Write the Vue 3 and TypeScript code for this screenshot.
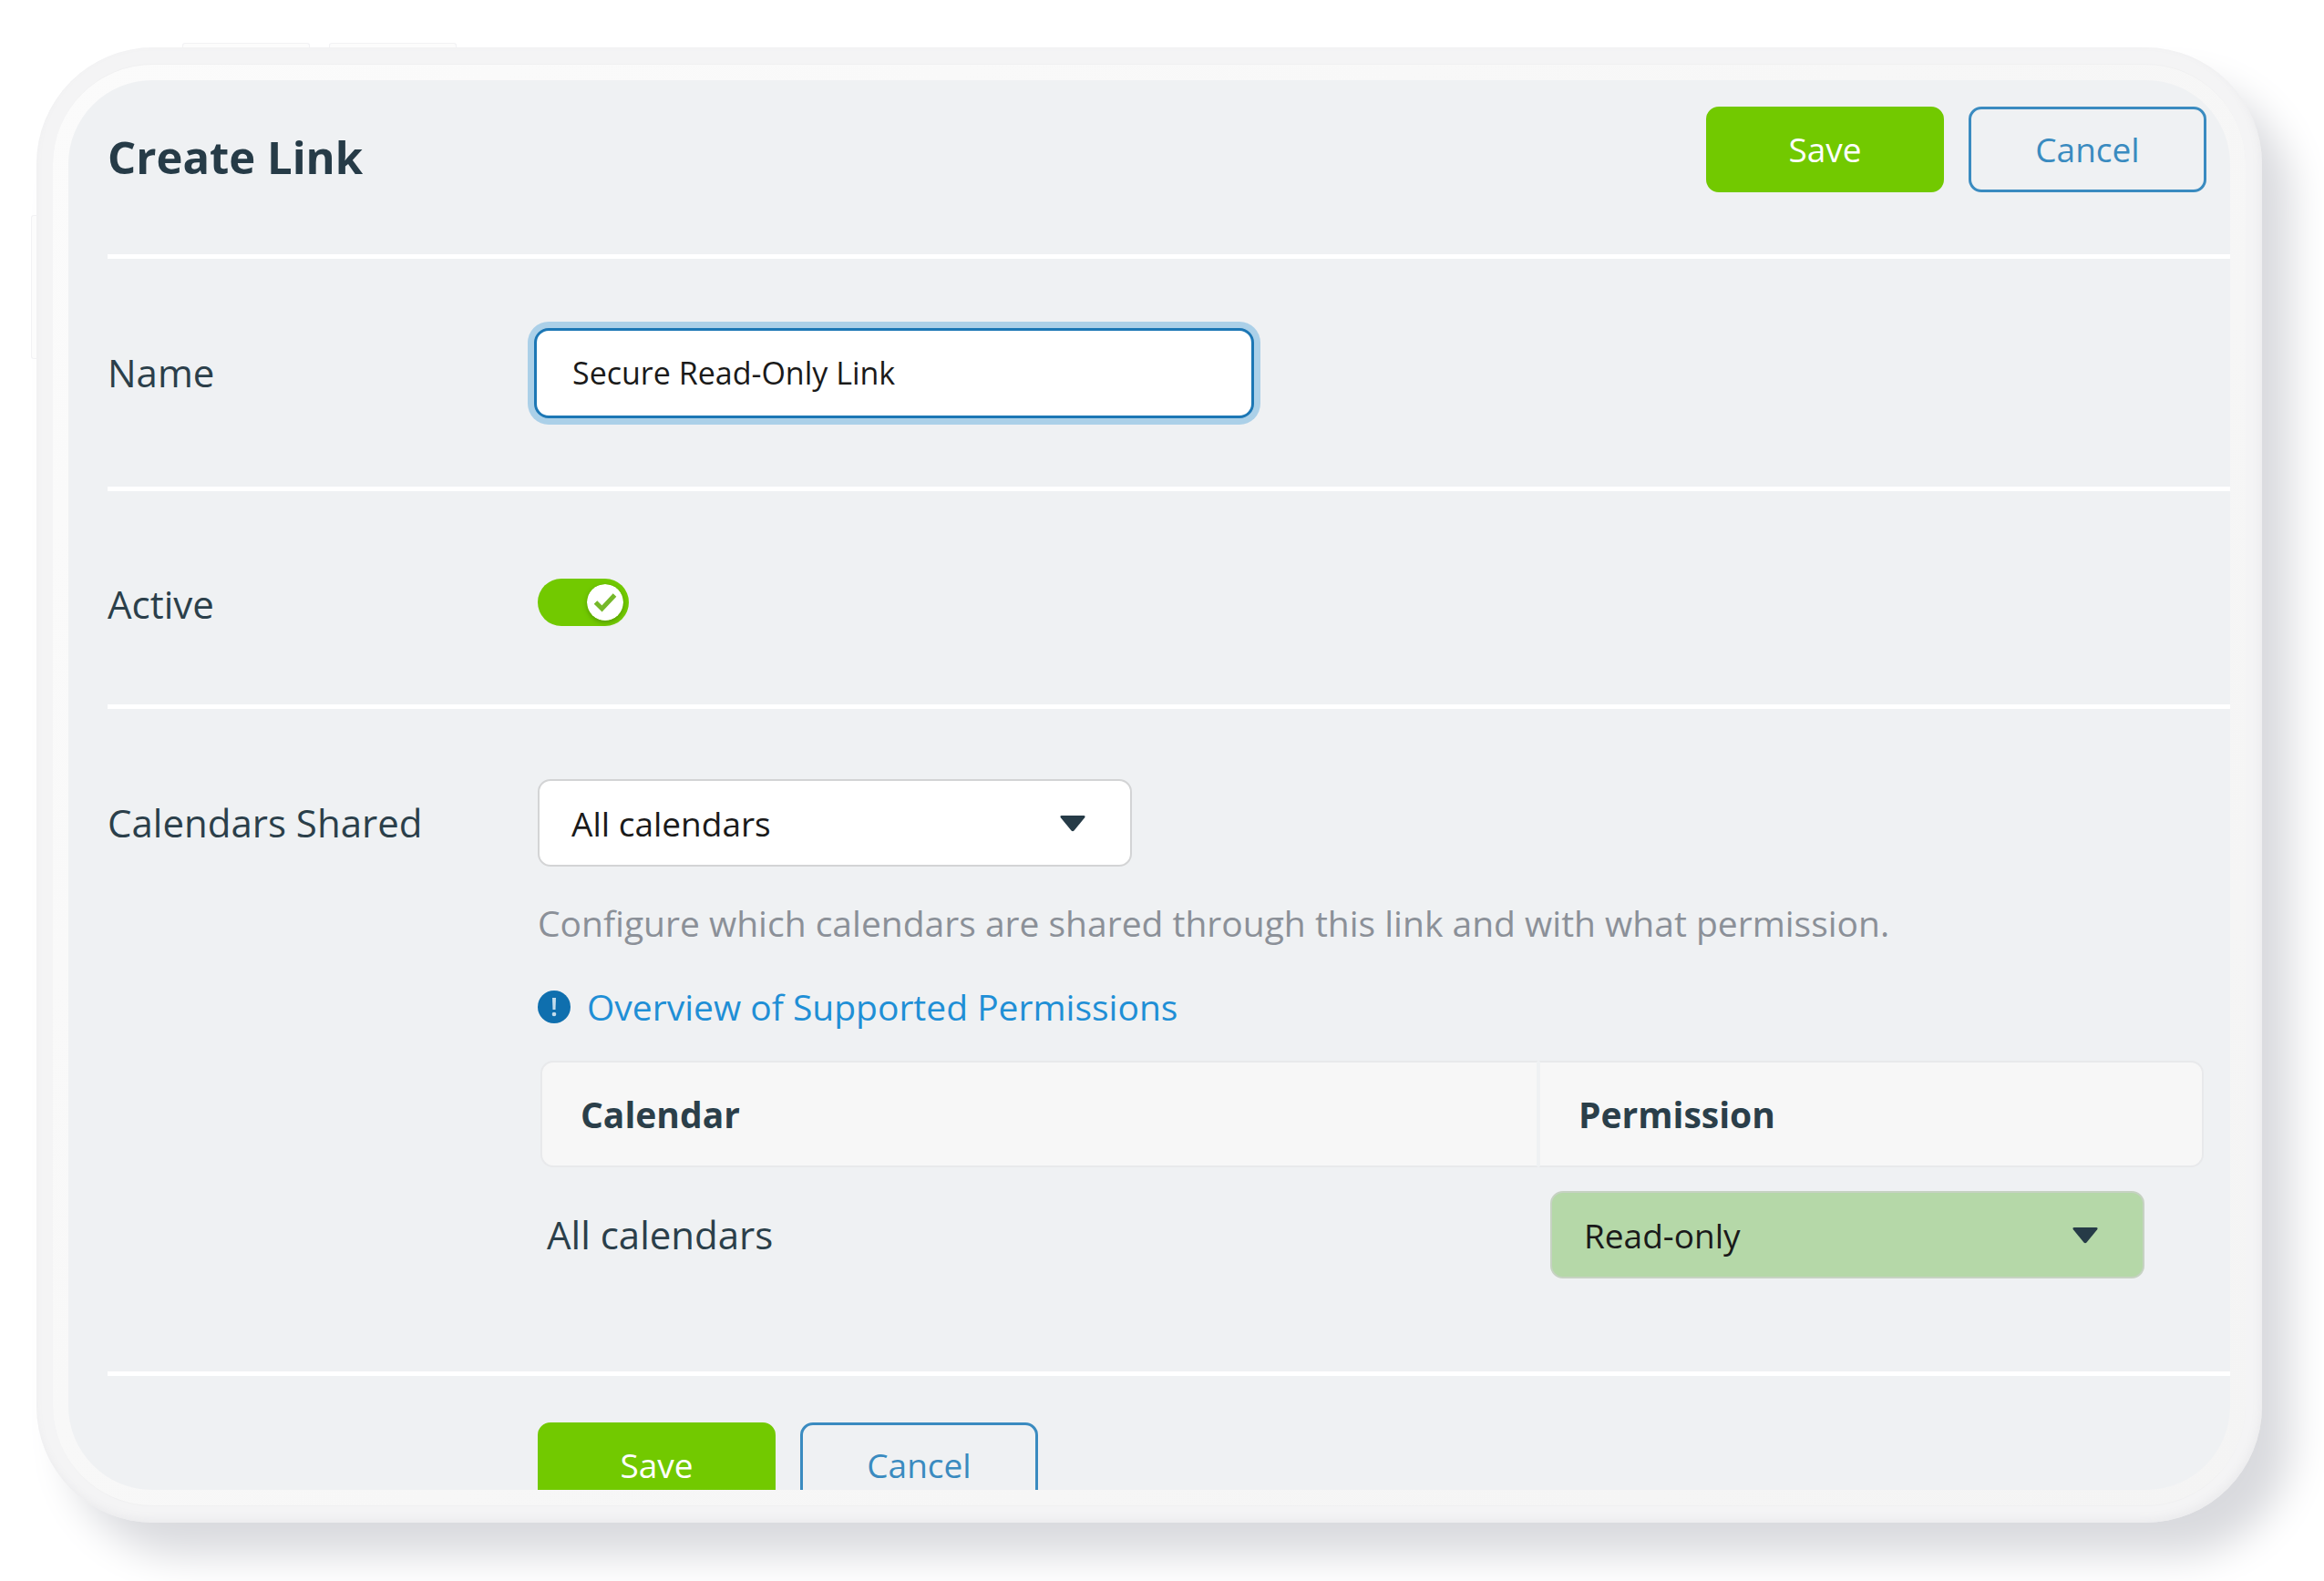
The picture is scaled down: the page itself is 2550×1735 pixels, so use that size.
<script setup lang="ts">
import { ref } from 'vue'

interface SharedCalendar {
  id: string
  name: string
  permission: string
}

const name = ref('Secure Read-Only Link')
const active = ref(true)
const scope = ref('all')
const calendars = ref<SharedCalendar[]>([
  { id: 'all', name: 'All calendars', permission: 'read' },
])
</script>

<template>
  <div class="page">
    <div class="device">
      <span class="key key-top key-first"></span>
      <span class="key key-top key-second"></span>
      <span class="key key-side"></span>
      <div class="bezel">
        <form class="screen" @submit.prevent>
          <header class="header">
            <h1 class="title">Create Link</h1>
            <div class="actions">
              <button class="btn btn-primary" type="submit">Save</button>
              <button class="btn btn-outline" type="button">Cancel</button>
            </div>
          </header>

          <section class="row row-name">
            <label class="label" for="link-name">Name</label>
            <div class="control">
              <input id="link-name" v-model="name" class="text-input" type="text" />
            </div>
          </section>

          <section class="row row-active">
            <label class="label" for="link-active">Active</label>
            <div class="control">
              <span class="toggle">
                <input id="link-active" v-model="active" class="toggle-input" type="checkbox" />
                <svg class="toggle-knob" viewBox="0 0 40 40" aria-hidden="true">
                  <circle cx="20" cy="20" r="20" fill="#fff" />
                  <path d="M9.500 20 L16.500 27 L30.500 12" fill="none" stroke="#76b82a" stroke-width="5" />
                </svg>
              </span>
            </div>
          </section>

          <section class="row row-calendars">
            <label class="label label-tall" for="link-scope">Calendars Shared</label>
            <div class="control">
              <span class="select-wrap">
                <select id="link-scope" v-model="scope" class="select">
                  <option value="all">All calendars</option>
                  <option value="selected">Selected calendars</option>
                </select>
                <svg class="caret" viewBox="0 0 28 18" aria-hidden="true">
                  <path d="M2 0 H26 Q28.500 0 27 2.500 L15.500 16.500 Q14 18 12.500 16.500 L1 2.500 Q-0.500 0 2 0 Z" fill="#263b47" />
                </svg>
              </span>
              <p class="hint">
                Configure which calendars are shared through this link and with what permission.
              </p>
              <a class="overview" href="#permissions">
                <svg class="overview-icon" viewBox="0 0 36 36" aria-hidden="true">
                  <circle cx="18" cy="18" r="18" fill="#0f6fae" />
                  <path d="M16 8 H20 L19.500 21 H16.500 Z" fill="#c3dcec" />
                  <circle cx="18" cy="26" r="2.300" fill="#c3dcec" />
                </svg>
                <span>Overview of Supported Permissions</span>
              </a>
              <table class="table">
                <thead>
                  <tr>
                    <th class="col-calendar" scope="col">Calendar</th>
                    <th class="col-permission" scope="col">Permission</th>
                  </tr>
                </thead>
                <tbody>
                  <tr v-for="calendar in calendars" :key="calendar.id">
                    <td class="cell-name">{{ calendar.name }}</td>
                    <td class="cell-permission">
                      <span class="select-wrap">
                        <select v-model="calendar.permission" class="select select-green" aria-label="Permission">
                          <option value="read">Read-only</option>
                          <option value="write">Read-write</option>
                        </select>
                        <svg class="caret" viewBox="0 0 28 18" aria-hidden="true">
                          <path d="M2 0 H26 Q28.500 0 27 2.500 L15.500 16.500 Q14 18 12.500 16.500 L1 2.500 Q-0.500 0 2 0 Z" fill="#263b47" />
                        </svg>
                      </span>
                    </td>
                  </tr>
                </tbody>
              </table>
            </div>
          </section>

          <footer class="row row-footer">
            <div class="control actions">
              <button class="btn btn-primary" type="submit">Save</button>
              <button class="btn btn-outline" type="button">Cancel</button>
            </div>
          </footer>
        </form>
      </div>
    </div>
  </div>
</template>

<style>
body {
  background: #fff;
}
</style>

<style scoped>
* {
  box-sizing: border-box;
}

.page {
  display: flex;
  height: 100vh;
  padding: 52px 68px 64px 40px;
  overflow: hidden;
  font-family: "Open Sans", "Noto Sans", sans-serif;
  color: #2b3f4a;
}

.device {
  position: relative;
  display: flex;
  flex: 1;
  min-width: 0;
  padding: 18px;
  border-radius: 128px;
  background: #f4f4f5;
  box-shadow:
    inset -2px -4px 10px #ebebed,
    34px 38px 44px -2px #d9dade;
}

.key {
  position: absolute;
  border: 1px solid #f2f2f4;
  background: #fcfcfc;
}

.key-top {
  top: -5px;
  width: 140px;
  height: 5px;
  border-bottom: 0;
  border-radius: 3px 3px 0 0;
}

.key-first {
  left: 160px;
}

.key-second {
  left: 321px;
}

.key-side {
  top: 184px;
  left: -6px;
  width: 6px;
  height: 158px;
  border-right: 0;
  border-radius: 3px 0 0 3px;
}

.bezel {
  display: flex;
  flex: 1;
  min-width: 0;
  padding: 17px;
  border: 1px solid #f0f0f1;
  border-width: 1px 0;
  border-radius: 110px;
  background: linear-gradient(135deg, #fbfbfb, #f7f7f7 50%, #f4f4f4);
}

.screen {
  flex: 1;
  min-width: 0;
  padding-left: 43px;
  border-radius: 92px;
  overflow: hidden;
  background: #eff1f3;
}

.header {
  display: flex;
  justify-content: space-between;
  align-items: flex-start;
  height: 196px;
  padding: 29px 26px 0 0;
  border-bottom: 5px solid #fff;
}

.title {
  margin: 25px 0 0;
  color: #263b47;
  font-size: 49px;
  line-height: 60px;
  font-weight: 700;
}

.actions {
  display: flex;
  gap: 27px;
}

.btn {
  width: 261px;
  height: 94px;
  padding: 0;
  border: 3px solid #72c900;
  border-radius: 14px;
  font-family: inherit;
  font-size: 37px;
  line-height: 60px;
}

.btn-primary {
  background: #72c900;
  color: #fff;
}

.btn-outline {
  border-color: #3a8bc0;
  background: transparent;
  color: #3a8bc0;
}

.row {
  display: grid;
  grid-template-columns: 472px 1fr;
  align-items: start;
  border-bottom: 5px solid #fff;
}

.row-name {
  align-items: center;
  height: 255px;
}

.row-active {
  align-items: center;
  height: 239px;
  padding-top: 10px;
}

.row-active .label {
  padding-top: 4px;
}

.row-calendars {
  padding: 77px 0 102px;
}

.row-footer {
  padding-top: 51px;
  border-bottom: 0;
}

.row-footer .control {
  grid-column: 2;
}

.label {
  font-size: 42px;
  line-height: 60px;
}

.label-tall {
  line-height: 96px;
}

.control {
  min-width: 0;
}

.text-input {
  display: block;
  width: 790px;
  max-width: 100%;
  height: 99px;
  margin-left: -4px;
  padding: 0 39px;
  border: 3px solid #1c77b5;
  border-radius: 16px;
  outline: none;
  box-shadow: 0 0 0 7px #abd0e8;
  background: #fff;
  color: #1a1a1a;
  font-family: inherit;
  font-size: 34px;
}

.toggle {
  position: relative;
  display: block;
  width: 100px;
  height: 52px;
}

.toggle-input {
  appearance: none;
  display: block;
  width: 100%;
  height: 100%;
  margin: 0;
  border-radius: 26px;
  background: #b9c0c5;
}

.toggle-input:checked {
  background: #72c900;
}

.toggle-knob {
  position: absolute;
  top: 6px;
  right: 6px;
  width: 40px;
  height: 40px;
  border-radius: 50%;
  box-shadow: 0 2px 5px #549a00;
  pointer-events: none;
}

.select-wrap {
  position: relative;
  display: block;
  width: 652px;
  max-width: 100%;
}

.select {
  appearance: none;
  display: block;
  width: 100%;
  height: 96px;
  margin: 0;
  padding: 0 80px 0 35px;
  border: 2px solid #d3d4d5;
  border-radius: 14px;
  background: #fff;
  color: #1a1a1a;
  font-family: inherit;
  font-size: 37px;
}

.select-green {
  border-color: #c6d2c2;
  background: #b5d8a8;
}

.caret {
  position: absolute;
  top: 40px;
  right: 51px;
  width: 28px;
  height: 18px;
  pointer-events: none;
}

.hint {
  margin: 32px 0;
  color: #8b9098;
  font-size: 39px;
  line-height: 60px;
}

.overview {
  display: flex;
  align-items: center;
  gap: 18px;
  color: #1f8fd6;
  font-size: 39px;
  line-height: 60px;
  text-decoration: none;
}

.overview-icon {
  width: 36px;
  height: 36px;
}

.table {
  width: calc(100% - 32px);
  margin: 29px 0 0 3px;
  border-spacing: 0;
  table-layout: fixed;
}

.table th {
  height: 117px;
  padding: 0 42px;
  border: 2px solid #e8e9eb;
  background: #f7f7f7;
  font-size: 39px;
  font-weight: 700;
  text-align: left;
}

.table .col-calendar {
  border-right-color: #eff1f3;
  border-radius: 14px 0 0 14px;
}

.table .col-permission {
  width: 40%;
  border-left-color: #eff1f3;
  border-radius: 0 14px 14px 0;
}

.table td {
  padding: 26px 0 0;
  font-size: 42px;
  line-height: 60px;
}

.table .cell-name {
  padding-left: 7px;
}

.table .cell-permission {
  padding-left: 13px;
}
</style>
